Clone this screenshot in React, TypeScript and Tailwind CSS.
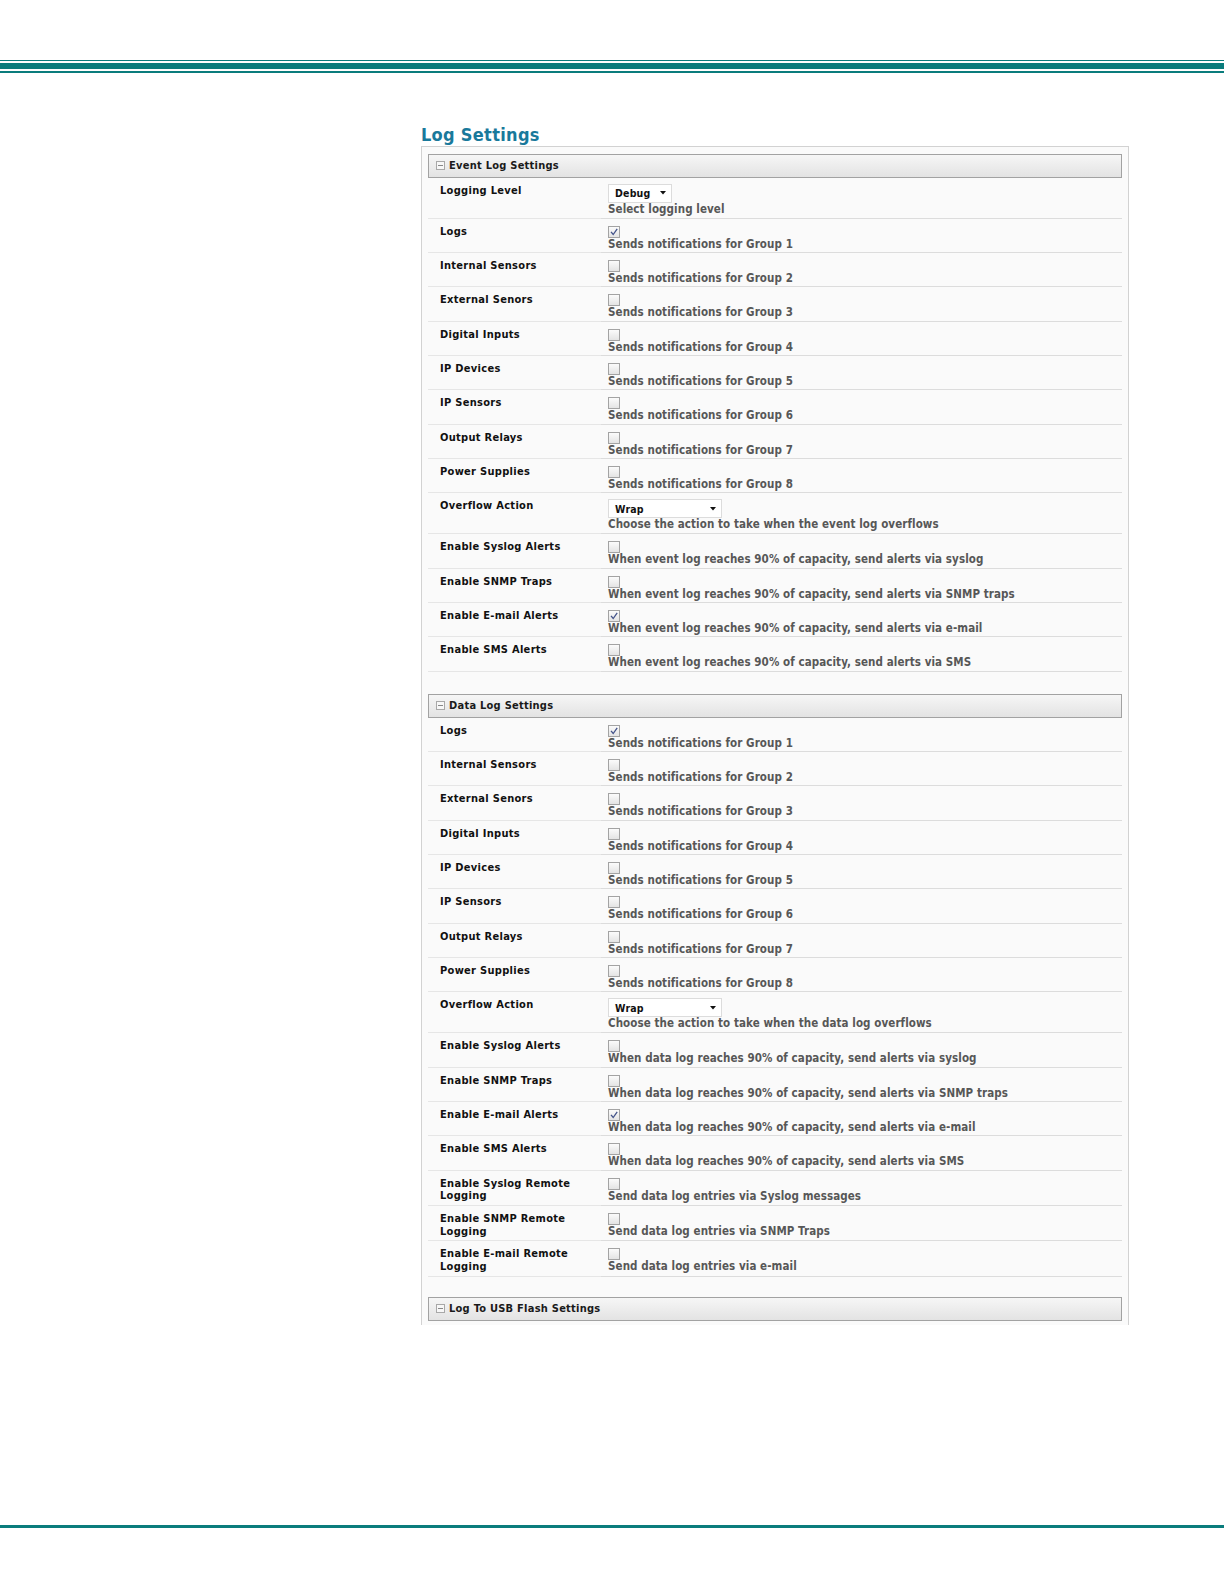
import React from "react";

const font = "[font-family:'DejaVu_Sans_Condensed','DejaVu_Sans',sans-serif]";

const groups = [
  "Logs",
  "Internal Sensors",
  "External Senors",
  "Digital Inputs",
  "IP Devices",
  "IP Sensors",
  "Output Relays",
  "Power Supplies",
];

const Checkbox = ({ checked }: { checked?: boolean }) => (
  <div className="w-[12px] h-[12px] border border-[#a3a3a3] bg-gradient-to-b from-[#fbfbfb] to-[#e4e4e4] flex items-center justify-center">
    {checked && (
      <svg width="10" height="10" viewBox="0 0 10 10">
        <path d="M2 4.8 L4.2 7.5 L8.2 1.8" fill="none" stroke="#44548a" strokeWidth="1.3" />
      </svg>
    )}
  </div>
);

const Select = ({ value, width }: { value: string; width: string }) => (
  <div className={`${width} h-[19px] border border-[#dcdcdc] bg-white flex items-center justify-between pl-[6px] pr-[5px]`}>
    <span className="text-[10.5px] font-bold text-[#111] leading-none tracking-[0.2px]">{value}</span>
    <svg width="6" height="4" viewBox="0 0 6 4">
      <path d="M0 0 H6 L3 3.5 Z" fill="#111" />
    </svg>
  </div>
);

const Row = ({ label, children, select }: { label: string; children: React.ReactNode; select?: boolean }) => (
  <div className="flex">
    <div className="w-[173px] shrink-0 border-b border-[#e6e6e6] pl-[12px] pr-[10px] pt-[7px] pb-[2.35px] text-[11px] leading-[12.5px] font-bold text-[#111] tracking-[0.3px]">
      {label}
    </div>
    <div className={`flex-1 border-b border-[#dcdcdc] pl-[7px] ${select ? "pt-[6px] pb-[2px]" : "pt-[7px] pb-[1.35px]"}`}>
      {children}
    </div>
  </div>
);

const Desc = ({ children }: { children: React.ReactNode }) => (
  <div className="text-[11.5px] leading-[13px] font-bold text-[#575757] whitespace-nowrap tracking-[0.08px]">{children}</div>
);

const CheckRow = ({ label, checked, text }: { label: string; checked?: boolean; text: string }) => (
  <Row label={label}>
    <Checkbox checked={checked} />
    <Desc>{text}</Desc>
  </Row>
);

const Header = ({ title, className = "" }: { title: string; className?: string }) => (
  <div className={`h-[24px] border border-[#a2a2a2] bg-gradient-to-b from-[#f6f6f6] to-[#e3e3e3] flex items-center pl-[7px] gap-[4px] ${className}`}>
    <div className="w-[9px] h-[9px] border border-[#a8a8a8] bg-[#f7f7f7] flex items-center justify-center">
      <div className="w-[5px] h-[1px] bg-[#888]" />
    </div>
    <span className="text-[11px] font-bold text-[#1a1a1a] leading-none tracking-[0.25px]">{title}</span>
  </div>
);

const LogSection = ({ kind }: { kind: "event" | "data" }) => (
  <>
    {kind === "event" && (
      <Row label="Logging Level" select>
        <Select value="Debug" width="w-[64px]" />
        <Desc>Select logging level</Desc>
      </Row>
    )}
    {groups.map((g, i) => (
      <CheckRow key={g} label={g} checked={i === 0} text={`Sends notifications for Group ${i + 1}`} />
    ))}
    <Row label="Overflow Action" select>
      <Select value="Wrap" width="w-[114px]" />
      <Desc>Choose the action to take when the {kind} log overflows</Desc>
    </Row>
    <CheckRow label="Enable Syslog Alerts" text={`When ${kind} log reaches 90% of capacity, send alerts via syslog`} />
    <CheckRow label="Enable SNMP Traps" text={`When ${kind} log reaches 90% of capacity, send alerts via SNMP traps`} />
    <CheckRow label="Enable E-mail Alerts" checked text={`When ${kind} log reaches 90% of capacity, send alerts via e-mail`} />
    <CheckRow label="Enable SMS Alerts" text={`When ${kind} log reaches 90% of capacity, send alerts via SMS`} />
  </>
);

const App = () => {
  return (
    <div className={`h-[1584px] w-full bg-white flex flex-col ${font}`}>
      <div className="pt-[60px]">
        <div className="h-[1px] bg-[#0a7c7c]" />
        <div className="h-[2px]" />
        <div className="h-[6px] bg-[#0a7c7c]" />
        <div className="h-[1.5px]" />
        <div className="h-[2px] bg-[#0a7c7c]" />
      </div>

      <div className="flex-1 pl-[421px] pt-[51px]">
        <h1 className="text-[18px] leading-[22px] font-bold text-[#19799b] tracking-[0.3px]">Log Settings</h1>
        <div className="w-[708px] border-t border-x border-[#d2d2d2] bg-[#fafafa] px-[6px] pt-[7px] pb-[4px]">
          <Header title="Event Log Settings" />
          <LogSection kind="event" />

          <Header title="Data Log Settings" className="mt-[22px]" />
          <LogSection kind="data" />
          <CheckRow label="Enable Syslog Remote Logging" text="Send data log entries via Syslog messages" />
          <CheckRow label="Enable SNMP Remote Logging" text="Send data log entries via SNMP Traps" />
          <CheckRow label="Enable E-mail Remote Logging" text="Send data log entries via e-mail" />

          <Header title="Log To USB Flash Settings" className="mt-[20px]" />
        </div>
      </div>

      <div className="h-[3px] bg-[#0a7c7c] mb-[56px]" />
    </div>
  );
};

export default App;
